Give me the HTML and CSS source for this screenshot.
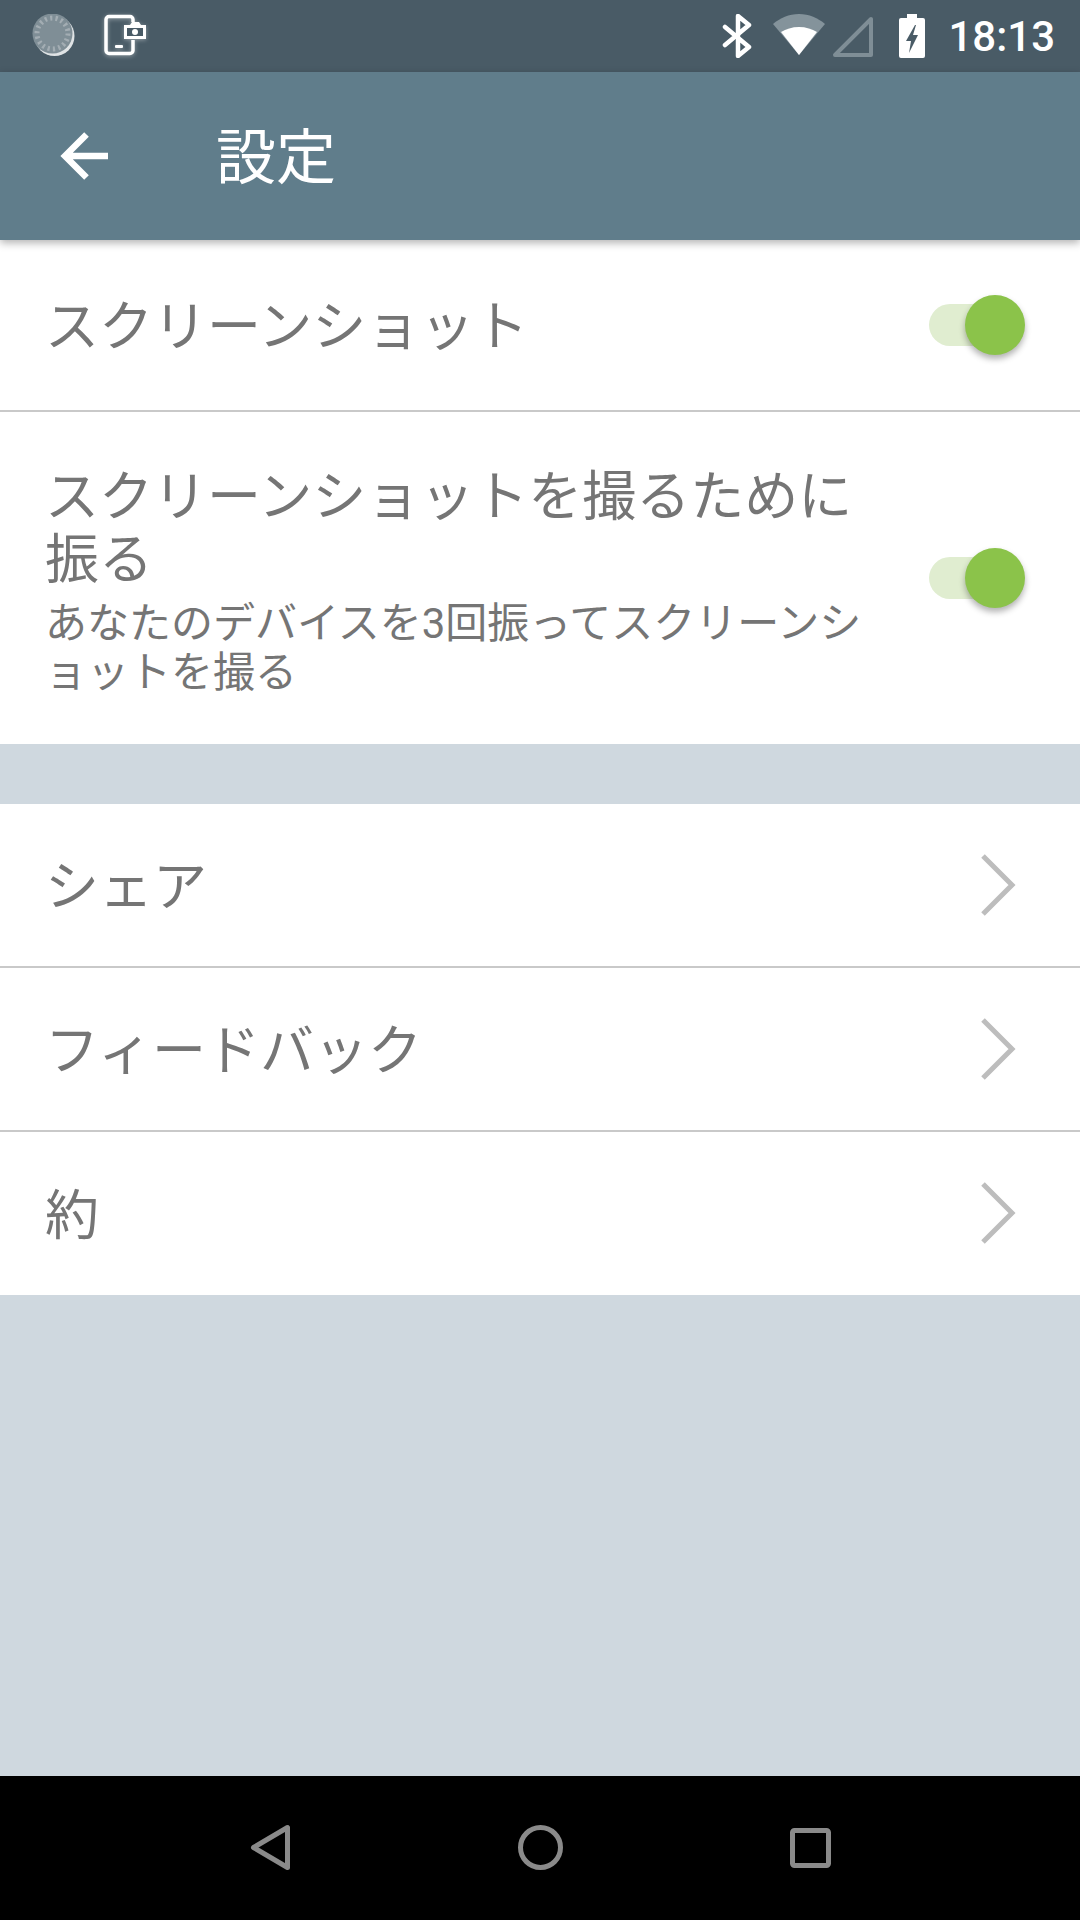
FILE: index.html
```html
<!DOCTYPE html>
<html lang="ja">

<head>
  <meta charset="UTF-8" />
  <meta name="viewport" content="width=device-width, initial-scale=1.0" />
  <title>設定</title>
  <link rel="stylesheet" href="styles.css">
</head>

<body>
  <div class="screen">
    <div class="status-bar">
      <div class="status-left">
        <svg class="status-icon" width="44" height="44" viewBox="0 0 44 44">
          <circle cx="23.500" cy="22" r="20" fill="#dfe3e5" />
          <circle cx="21.500" cy="19.500" r="20" fill="#7f8e96" />
          <circle cx="21.500" cy="19.500" r="15.500" fill="none" stroke="#a3adb3" stroke-width="5" stroke-dasharray="2.200 3.200" />
        </svg>
        <svg class="status-icon shot" width="44" height="44" viewBox="0 0 44 44">
          <path d="M31 8V5.500a3 3 0 0 0-3-3H7a3 3 0 0 0-3 3v31a3 3 0 0 0 3 3h21a3 3 0 0 0 3-3V26" fill="none" stroke="#fff" stroke-width="3.500" />
          <rect x="13" y="31" width="8" height="3" rx="1" fill="#fff" />
          <path d="M22 11h6l2-3h7l2 3h5v14H22z" fill="#fff" />
          <rect x="25" y="14" width="16" height="8" fill="#495b66" />
          <circle cx="33" cy="18" r="3" fill="#fff" />
        </svg>
      </div>
      <div class="status-right">
        <svg width="30" height="44" viewBox="0 0 30 44">
          <path d="M3 13l24 20-11 9V2l11 9L3 31" fill="none" stroke="#fff" stroke-width="4.500" stroke-linejoin="round" stroke-linecap="round" />
        </svg>
        <svg class="wifi" width="54" height="44" viewBox="0 0 54 44">
          <path d="M27 41L1 10C8 4 17 0 27 0s19 4 26 10z" fill="#84939b" />
          <path d="M27 41L9 18c5-3 11-5 18-5s13 2 18 5z" fill="#fff" />
        </svg>
        <svg class="signal" width="42" height="44" viewBox="0 0 42 44">
          <path d="M3 41L39 5v36z" fill="none" stroke="#7f8e96" stroke-width="4" stroke-linejoin="round" />
        </svg>
        <svg class="battery" width="26" height="44" viewBox="0 0 26 44">
          <path d="M8 0h10v4h6a2 2 0 0 1 2 2v36a2 2 0 0 1-2 2H2a2 2 0 0 1-2-2V6a2 2 0 0 1 2-2h6z" fill="#fff" />
          <path d="M16 11L7 27h5l-2 12 9-18h-5l3-10z" fill="#495b66" />
        </svg>
        <span class="time">18:13</span>
      </div>
    </div>

    <div class="toolbar">
      <svg class="back" width="50" height="50" viewBox="0 0 50 50">
        <path d="M49 25H5.500M27.500 3.500L6 25l21.500 21.500" fill="none" stroke="#fff" stroke-width="6.500" />
      </svg>
      <h1 class="toolbar-title">設定</h1>
    </div>

    <div class="group">
      <div class="row row-single">
        <div class="row-text">スクリーンショット</div>
        <div class="switch"><span class="knob"></span></div>
      </div>
      <div class="row row-tall">
        <div class="row-text">
          スクリーンショットを撮るために振る
          <div class="row-sub">あなたのデバイスを3回振ってスクリーンショットを撮る</div>
        </div>
        <div class="switch"><span class="knob"></span></div>
      </div>
    </div>

    <div class="group group-links">
      <div class="row link">
        <div class="row-text">シェア</div>
        <svg class="chevron" width="40" height="64" viewBox="0 0 40 64"><path d="M3 3l29 29L3 61" fill="none" stroke="#bdbdbd" stroke-width="5" /></svg>
      </div>
      <div class="row link">
        <div class="row-text">フィードバック</div>
        <svg class="chevron" width="40" height="64" viewBox="0 0 40 64"><path d="M3 3l29 29L3 61" fill="none" stroke="#bdbdbd" stroke-width="5" /></svg>
      </div>
      <div class="row link">
        <div class="row-text">約</div>
        <svg class="chevron" width="40" height="64" viewBox="0 0 40 64"><path d="M3 3l29 29L3 61" fill="none" stroke="#bdbdbd" stroke-width="5" /></svg>
      </div>
    </div>

    <div class="filler"></div>

    <div class="nav-bar">
      <svg width="44" height="60" viewBox="0 0 44 60">
        <path d="M39.500 9.500v40L5.500 29.500z" fill="none" stroke="#8a8a8a" stroke-width="5" stroke-linejoin="round" />
      </svg>
      <svg width="46" height="60" viewBox="0 0 46 60">
        <circle cx="22.500" cy="29.500" r="20" fill="none" stroke="#8a8a8a" stroke-width="5" />
      </svg>
      <svg width="42" height="60" viewBox="0 0 42 60">
        <rect x="2.500" y="12.500" width="36" height="35" rx="2" fill="none" stroke="#8a8a8a" stroke-width="5" />
      </svg>
    </div>
  </div>
</body>

</html>
```

FILE: styles.css
```css
* {
  box-sizing: border-box;
}

body {
  margin: 0;
  padding: 0;
  font-family: Roboto, "Noto Sans CJK JP", sans-serif;
  background-color: #cfd8df;
}

.screen {
  width: 1080px;
  height: 1920px;
  display: flex;
  flex-direction: column;
  overflow: hidden;
}

.status-bar {
  height: 72px;
  flex-shrink: 0;
  background-color: #495b66;
  display: flex;
  justify-content: space-between;
  align-items: center;
  padding: 0 25px 0 31px;
}

.status-left {
  display: flex;
  align-items: center;
  gap: 27px;
}

.shot {
  filter: drop-shadow(0 1px 2px rgba(255, 255, 255, 0.4));
}

.status-right {
  display: flex;
  align-items: center;
}

.status-right svg {
  display: block;
}

.wifi {
  margin-left: 20px;
}

.signal {
  margin-left: 6px;
}

.battery {
  margin-left: 25px;
}

.time {
  margin-left: 23px;
  font-size: 42px;
  font-weight: 500;
  color: #fff;
}

.toolbar {
  height: 168px;
  flex-shrink: 0;
  background-color: #607d8b;
  display: flex;
  align-items: center;
  padding-left: 59px;
  box-shadow: 0 3px 8px rgba(0, 0, 0, 0.3);
  position: relative;
}

.toolbar-title {
  margin: 0 0 0 107px;
  padding-bottom: 7px;
  font-size: 60px;
  font-weight: 400;
  color: #fff;
}

.group {
  background-color: #fff;
}

.group-links {
  margin-top: 60px;
}

.row {
  display: flex;
  justify-content: space-between;
  align-items: center;
  padding: 0 55px 0 45px;
  border-bottom: 2px solid #c9c9c9;
}

.row:last-child {
  border-bottom: none;
}

.row-single {
  height: 172px;
}

.row-tall {
  height: 332px;
}

.link {
  height: 164px;
  padding-right: 60px;
}

.link:last-child {
  height: 163px;
}

.link:last-child .chevron {
  margin-top: -1px;
}

.row-text {
  width: 830px;
  padding-top: 5px;
  font-size: 54px;
  line-height: 63px;
  color: #757575;
  line-break: anywhere;
}

.row-tall .row-text {
  padding-top: 7px;
}

.row-sub {
  margin-top: 7px;
  font-size: 42px;
  line-height: 49px;
}

.switch {
  width: 95px;
  height: 42px;
  margin-right: 1px;
  border-radius: 21px;
  background-color: #e0edd0;
  position: relative;
}

.knob {
  position: absolute;
  right: -1px;
  top: -9px;
  width: 60px;
  height: 60px;
  border-radius: 50%;
  background-color: #8bc34a;
  box-shadow: 0 4px 6px rgba(0, 0, 0, 0.3);
}

.filler {
  flex: 1;
}

.nav-bar {
  height: 144px;
  flex-shrink: 0;
  background-color: #000;
  display: flex;
  justify-content: space-between;
  align-items: center;
  padding: 0 248px;
}
```
